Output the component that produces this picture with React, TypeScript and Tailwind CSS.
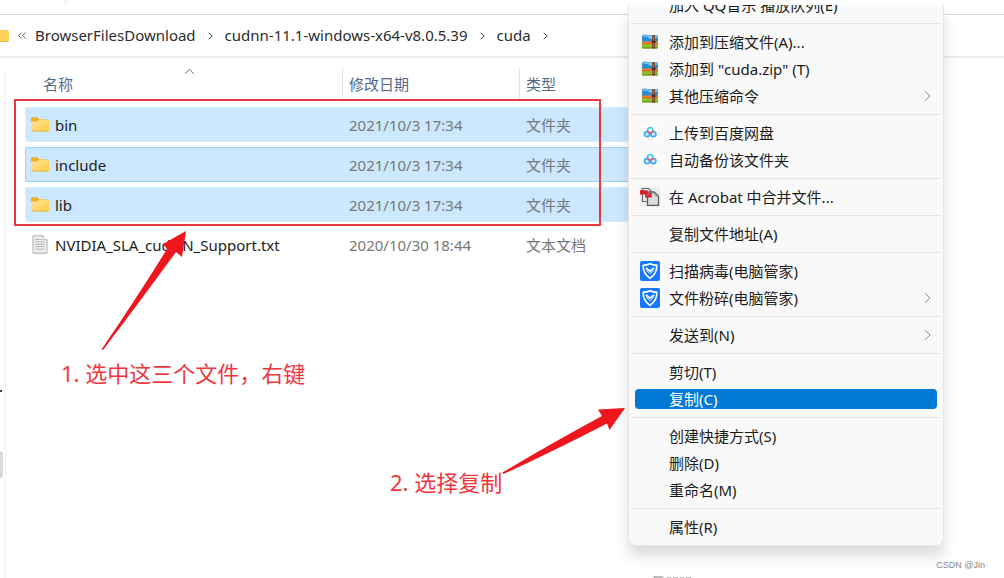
import React from 'react';

type IconName = 'archive' | 'netdisk' | 'acrobat' | 'shield';

interface MenuEntry {
  label: string;
  icon?: IconName;
  submenu?: boolean;
  active?: boolean;
}

interface FileEntry {
  name: string;
  date: string;
  type: string;
  selected?: boolean;
  focused?: boolean;
}

const crumbs = ['BrowserFilesDownload', 'cudnn-11.1-windows-x64-v8.0.5.39', 'cuda'];

const files: FileEntry[] = [
  { name: 'bin', date: '2021/10/3 17:34', type: '文件夹', selected: true },
  { name: 'include', date: '2021/10/3 17:34', type: '文件夹', selected: true, focused: true },
  { name: 'lib', date: '2021/10/3 17:34', type: '文件夹', selected: true },
  { name: 'NVIDIA_SLA_cudNN_Support.txt', date: '2020/10/30 18:44', type: '文本文档' },
];

const menuGroups: MenuEntry[][] = [
  [{ label: '加入 QQ音乐 播放队列(E)' }],
  [
    { label: '添加到压缩文件(A)...', icon: 'archive' },
    { label: '添加到 "cuda.zip" (T)', icon: 'archive' },
    { label: '其他压缩命令', icon: 'archive', submenu: true },
  ],
  [
    { label: '上传到百度网盘', icon: 'netdisk' },
    { label: '自动备份该文件夹', icon: 'netdisk' },
  ],
  [{ label: '在 Acrobat 中合并文件...', icon: 'acrobat' }],
  [{ label: '复制文件地址(A)' }],
  [
    { label: '扫描病毒(电脑管家)', icon: 'shield' },
    { label: '文件粉碎(电脑管家)', icon: 'shield', submenu: true },
  ],
  [{ label: '发送到(N)', submenu: true }],
  [{ label: '剪切(T)' }, { label: '复制(C)', active: true }],
  [{ label: '创建快捷方式(S)' }, { label: '删除(D)' }, { label: '重命名(M)' }],
  [{ label: '属性(R)' }],
];

const FolderIcon = () => (
  <svg width="18" height="15" viewBox="0 0 18 15" aria-hidden="true">
    <defs>
      <linearGradient id="folder" x1="0" y1="0" x2="1" y2="1">
        <stop offset="0" stopColor="#ffe6a0" />
        <stop offset="1" stopColor="#fdca42" />
      </linearGradient>
    </defs>
    <path d="M0 1.2Q0 .3 .9 .3H6.4Q7 .3 7.4 .9L8.6 2.4H17Q18 2.4 18 3.4V6H0Z" fill="#f0b01e" />
    <path d="M0 4.6H6.6L8.3 2.8H17.2Q18 2.8 18 3.6V13.4Q18 14.3 17.1 14.3H.9Q0 14.3 0 13.4Z" fill="url(#folder)" />
    <path d="M.4 14H17.6" stroke="#e7af35" strokeWidth=".8" />
  </svg>
);

const TextFileIcon = () => (
  <svg width="16" height="19" viewBox="0 0 16 19" aria-hidden="true">
    <path d="M1 .8H11L15 4.8V18.2H1Z" fill="#efefef" stroke="#b0b0b0" />
    <path d="M11 .8V4.8H15" fill="#fff" stroke="#b0b0b0" strokeWidth=".8" />
    <path d="M3.2 4.5H9.5M3.2 6.9H12.8M3.2 9.3H12.8M3.2 11.7H12.8M3.2 14.1H12.8" stroke="#b4b4b4" strokeWidth="1" />
  </svg>
);

const MenuIcon = ({ name }: { name: IconName }) => {
  if (name === 'archive') {
    return (
      <svg width="16" height="15" viewBox="0 0 16 15" aria-hidden="true">
        <path d="M0 2Q1 0 3.5 .6L5.5 1.2H15Q16 1.2 16 2.2V8H0Z" fill="#2b8bd3" />
        <path d="M.5 3.6Q4 1.6 7 4T15.6 3.4V1.8H5.5L3 1Q1 1 .5 3.6Z" fill="#7cc4f2" />
        <path d="M0 7.4H16V10.4H0Z" fill="#ef8226" />
        <path d="M0 9.6H16V10.6H0Z" fill="#b9541b" />
        <path d="M0 10.6H16V13.4Q16 14.4 15 14.4H1Q0 14.4 0 13.4Z" fill="#8cbf26" />
        <path d="M0 13.2H16V13.8Q16 14.6 15 14.6H1Q0 14.6 0 13.8Z" fill="#6a9c1c" />
        <path d="M10.2 1.2H13V14.6H10.2Z" fill="#7a4026" />
        <path d="M11.2 3H12V13H11.2Z" fill="#b97a48" />
        <path d="M9.8 6.8H13.4V9H9.8Z" fill="#55291a" />
      </svg>
    );
  }
  if (name === 'netdisk') {
    return (
      <svg width="16" height="16" viewBox="0 0 16 16" aria-hidden="true">
        <rect width="16" height="16" rx="4" fill="#fff" />
        <circle cx="8.2" cy="5.2" r="2.7" fill="none" stroke="#4dbaf6" strokeWidth="1.7" />
        <circle cx="5" cy="9.2" r="2.5" fill="#d4efff" stroke="#3fb0f4" strokeWidth="1.8" />
        <circle cx="11.4" cy="9.2" r="2.5" fill="#d4efff" stroke="#3fb0f4" strokeWidth="1.8" />
        <path d="M5.4 6.4L8.2 8.6L11 6.4" fill="none" stroke="#e8596b" strokeWidth="1.6" />
        <path d="M5.5 14.6H11" stroke="#f5bcc6" strokeWidth=".8" />
      </svg>
    );
  }
  if (name === 'acrobat') {
    return (
      <svg width="20" height="20" viewBox="0 0 20 20" aria-hidden="true">
        <rect width="20" height="20" fill="#ececec" />
        <path d="M2.5 1.5H8.5L11 4V14.5H2.5Z" fill="#f0f0f0" stroke="#666" strokeWidth="1.2" />
        <path d="M7.5 5H14L18.5 9V18.3H7.5Z" fill="#dedede" stroke="#5c5c5c" strokeWidth="1.3" />
        <path d="M13.5 5.5Q14.500 9 18.5 9.5" fill="#f4f4f4" stroke="#777" />
        <path d="M0 3.2H7.5V6H11.8V10.6H5V7.4H0Z" fill="#d6202b" />
        <path d="M6 9.3L8.2 6.8L10.8 8.6" fill="none" stroke="#ef7d82" strokeWidth=".8" />
      </svg>
    );
  }
  return (
    <svg width="20" height="20" viewBox="0 0 20 20" aria-hidden="true">
      <rect width="20" height="20" rx="2" fill="#1677ff" />
      <path d="M3.2 4.4Q7 4.3 10 2.8Q13 4.3 16.8 4.4Q17.2 12.600 10 17.200Q2.800 12.600 3.200 4.400Z" fill="none" stroke="#fff" strokeWidth="1.7" />
      <path d="M6 7L10 10.200L14 7" fill="none" stroke="#fff" strokeWidth="1.8" />
      <path d="M6.200 9.400L10 12.600L13.800 9.400" fill="none" stroke="#d7e8ff" strokeWidth="1" />
    </svg>
  );
};

const Chevron = ({ className }: { className: string }) => (
  <svg className={className} viewBox="0 0 8 14" fill="none" stroke="currentColor" aria-hidden="true">
    <path d="M1 1.5L7 7L1 12.5" vectorEffect="non-scaling-stroke" />
  </svg>
);

const AddressBar = () => (
  <nav aria-label="路径" className="flex h-[43px] items-center border-b-2 border-[#ebebeb] text-[15px] text-[#2c2c2c]">
    <span className="h-3 w-[9px] shrink-0 rounded-r-xs border-b border-[#e9b33c] bg-[#ffd25e]" />
    <svg className="mx-2 h-[7px] w-[10px] text-[#666]" viewBox="0 0 10 7" fill="none" stroke="currentColor" aria-hidden="true">
      <path d="M4.5 .5L1.5 3.5L4.5 6.5M8.5 .5L5.5 3.5L8.5 6.5" />
    </svg>
    <ol className="flex items-center">
      {crumbs.map(c => (
        <li key={c} className="flex items-center">
          <a href="#">{c}</a>
          <Chevron className="mx-3 h-2 w-[5px] text-[#444]" />
        </li>
      ))}
    </ol>
  </nav>
);

const FileTable = () => (
  <table className="w-[700px] table-fixed border-separate border-spacing-0 text-left text-[15px] leading-5">
    <thead className="text-[#54698a]">
      <tr>
        <th className="relative h-8 w-[317px] pl-[18px] font-normal">
          名称
          <Chevron className="absolute left-[161px] -top-0.5 h-[11px] w-[7px] -rotate-90 text-[#777]" />
        </th>
        <th className="w-[177px] border-l border-[#e4e4e4] pl-1.5 font-normal">修改日期</th>
        <th className="border-l border-[#e4e4e4] pl-1.5 font-normal">类型</th>
      </tr>
      <tr>
        <td colSpan={3} className="h-[7px] p-0" />
      </tr>
    </thead>
    <tbody>
      {files.map(f => {
        const tone = f.focused
          ? 'border-[#99d1ff] bg-[#cce8ff]'
          : f.selected
            ? 'border-[#d9eeff] bg-[#cce8ff]'
            : 'border-transparent';
        return (
          <React.Fragment key={f.name}>
            <tr className="text-[#777]">
              <td className={`h-[35px] rounded-l-xs border-y border-l p-0 text-[#1c1c1c] ${tone}`}>
                <div className="flex items-center">
                  <span className="flex w-[29px] justify-center pr-px">
                    {f.type === '文件夹' ? <FolderIcon /> : <TextFileIcon />}
                  </span>
                  {f.name}
                </div>
              </td>
              <td className={`border-y p-0 pl-[7px] ${tone}`}>{f.date}</td>
              <td className={`border-y p-0 pl-[7px] ${tone}`}>{f.type}</td>
            </tr>
            <tr>
              <td colSpan={3} className="h-[5px] p-0" />
            </tr>
          </React.Fragment>
        );
      })}
    </tbody>
  </table>
);

const ContextMenu = () => (
  <div
    role="menu"
    className="absolute left-[628px] top-[5px] w-[316px] overflow-hidden rounded-b-lg border-x border-b border-[#e6e6e6] bg-[#f9f9f9] pb-[5px] shadow-[0_10px_14px_rgba(0,0,0,0.14)]"
  >
    <div className="-mt-[14px]">
      {menuGroups.map((group, i) => (
        <div key={group[0].label}>
          {i > 0 && <hr className="mx-0.5 mb-1 mt-[5px] border-[#e5e5e5]" />}
          {group.map(item => (
            <div key={item.label} className="flex h-[27px] items-center px-1.5">
              <button
                type="button"
                role="menuitem"
                className={`flex h-5 w-full items-center rounded pl-[5px] pr-1.5 text-left text-[15px] leading-5 ${item.active ? 'bg-[#0078d4] text-white' : 'text-[#1b1b1b]'}`}
              >
                <span className="mr-[9px] flex w-5 justify-center">{item.icon && <MenuIcon name={item.icon} />}</span>
                <span className="whitespace-nowrap">{item.label}</span>
                {item.submenu && <Chevron className="ml-auto h-3 w-[7px] text-[#8a8a8a]" />}
              </button>
            </div>
          ))}
        </div>
      ))}
    </div>
  </div>
);

const Annotations = () => (
  <>
    <div className="pointer-events-none absolute left-[14px] top-[99px] h-[127px] w-[587px] border-2 border-[#ea3840]" />
    <svg className="pointer-events-none absolute left-0 top-0" width="640" height="500" viewBox="0 0 640 500" fill="#f0161e" aria-hidden="true">
      <path d="M186 231L163 244L167 249Q138 296 101.5 349.5L103 350Q138 304 176 252L182 257Z" />
      <path d="M625 408L598 409.5L602 416Q550 444 502.5 472.5L503.5 474Q552 452 607 423.5L609.5 430Z" />
    </svg>
    <p className="absolute left-[61px] top-[357px] whitespace-nowrap text-[22px] leading-8 text-[#f2363e]">1. 选中这三个文件，右键</p>
    <p className="absolute left-[390px] top-[466px] whitespace-nowrap text-[22px] leading-8 text-[#f2363e]">2. 选择复制</p>
  </>
);

export default function App() {
  return (
    <div
      lang="zh-CN"
      className="relative flex min-h-screen flex-col overflow-hidden bg-white font-['Noto_Sans','Noto_Sans_CJK_SC',sans-serif]"
    >
      <header>
        <div className="h-[15px] border-b border-[#dcdcdc]">
          <div className="ml-16 h-1 w-1 bg-[#f3f3f3]" />
        </div>
        <AddressBar />
      </header>

      <main className="flex flex-1 pt-2.5">
        <aside className="flex w-[5px] shrink-0 flex-col">
          <span className="mt-[322px] h-0.5 w-0.5 bg-[#3c3c50]" />
          <span className="mt-[59px] h-[27px] w-[3px] rounded-r-sm bg-[#d9d9d9]" />
        </aside>
        <section className="flex-1 border-l border-[#f3f3f3] pl-[19px]">
          <FileTable />
        </section>
      </main>

      <ContextMenu />
      <Annotations />

      <svg className="absolute bottom-0 left-[651px]" width="42" height="2" viewBox="0 0 42 2" stroke="#bbb" aria-hidden="true">
        <path d="M2 .5H12M3 1.5H13M16 1.5H20M22 1.5H27M29 1.5H33M35 1.5H40" />
      </svg>
      <span className="absolute bottom-1.5 right-4 font-['Liberation_Sans',sans-serif] text-[9px] leading-[14px] text-[#888]">CSDN @Jin·</span>
    </div>
  );
}
